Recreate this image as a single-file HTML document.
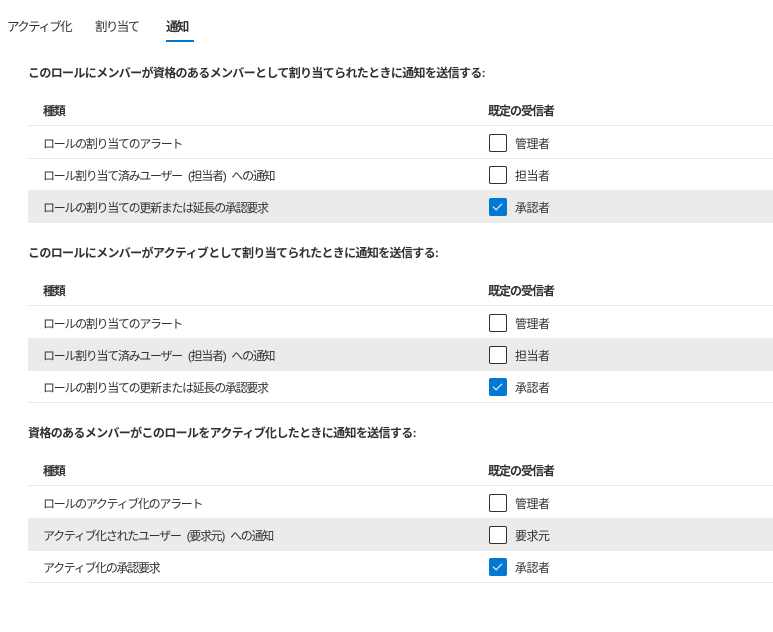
<!DOCTYPE html>
<html><head><meta charset="utf-8"><style>
body{margin:0;width:773px;height:632px;background:#fff;font-family:"Liberation Sans","Noto Sans CJK JP",sans-serif;color:#323130;position:relative;overflow:hidden}
.a{position:absolute;white-space:nowrap}
.tab{top:16px;font-size:12.5px;letter-spacing:-1.6px}
.t{font-size:12px;font-weight:bold;letter-spacing:-0.65px;left:28px}
.row{position:absolute;left:28px;width:745px;height:31px;border-bottom:1px solid #edebe9}
.row.g{background:#edebe9}
.c1{position:absolute;left:15px;top:8px;font-size:12px;letter-spacing:-1.3px;word-spacing:4px;white-space:pre}
.h .c1,.h .c2{font-weight:bold}
.c2{position:absolute;left:460px;top:8px;font-size:12px;letter-spacing:-1px}
.cb{position:absolute;left:461px;top:7px;width:16px;height:16px;border:1px solid #323130;border-radius:2px;background:#fff}
.cb.k{background:#0078d4;border-color:#0078d4}
.cb.k::after{content:"";position:absolute;left:5px;top:2px;width:4px;height:8px;border:solid #fff;border-width:0 1.3px 1.3px 0;transform:rotate(45deg)}
.lb{position:absolute;left:487px;top:8px;font-size:12px;letter-spacing:-0.5px}
</style></head><body>
<div class="a tab" style="left:7px">アクティブ化</div>
<div class="a tab" style="left:95px">割り当て</div>
<div class="a tab" style="left:166px;font-weight:bold">通知</div>
<div class="a" style="left:166px;top:40px;width:28px;height:2px;background:#0078d4"></div>

<div class="a t" style="top:64px">このロールにメンバーが資格のあるメンバーとして割り当てられたときに通知を送信する:</div>
<div class="row h" style="top:94px"><div class="c1">種類</div><div class="c2">既定の受信者</div></div>
<div class="row" style="top:127px"><div class="c1">ロールの割り当てのアラート</div><div class="cb"></div><div class="lb">管理者</div></div>
<div class="row" style="top:159px"><div class="c1">ロール割り当て済みユーザー (担当者) への通知</div><div class="cb"></div><div class="lb">担当者</div></div>
<div class="row g" style="top:191px"><div class="c1">ロールの割り当ての更新または延長の承認要求</div><div class="cb k"></div><div class="lb">承認者</div></div>

<div class="a t" style="top:244px">このロールにメンバーがアクティブとして割り当てられたときに通知を送信する:</div>
<div class="row h" style="top:274px"><div class="c1">種類</div><div class="c2">既定の受信者</div></div>
<div class="row" style="top:307px"><div class="c1">ロールの割り当てのアラート</div><div class="cb"></div><div class="lb">管理者</div></div>
<div class="row g" style="top:339px"><div class="c1">ロール割り当て済みユーザー (担当者) への通知</div><div class="cb"></div><div class="lb">担当者</div></div>
<div class="row" style="top:371px"><div class="c1">ロールの割り当ての更新または延長の承認要求</div><div class="cb k"></div><div class="lb">承認者</div></div>

<div class="a t" style="top:424px">資格のあるメンバーがこのロールをアクティブ化したときに通知を送信する:</div>
<div class="row h" style="top:454px"><div class="c1">種類</div><div class="c2">既定の受信者</div></div>
<div class="row" style="top:487px"><div class="c1">ロールのアクティブ化のアラート</div><div class="cb"></div><div class="lb">管理者</div></div>
<div class="row g" style="top:519px"><div class="c1">アクティブ化されたユーザー (要求元) への通知</div><div class="cb"></div><div class="lb">要求元</div></div>
<div class="row" style="top:551px"><div class="c1">アクティブ化の承認要求</div><div class="cb k"></div><div class="lb">承認者</div></div>
</body></html>
